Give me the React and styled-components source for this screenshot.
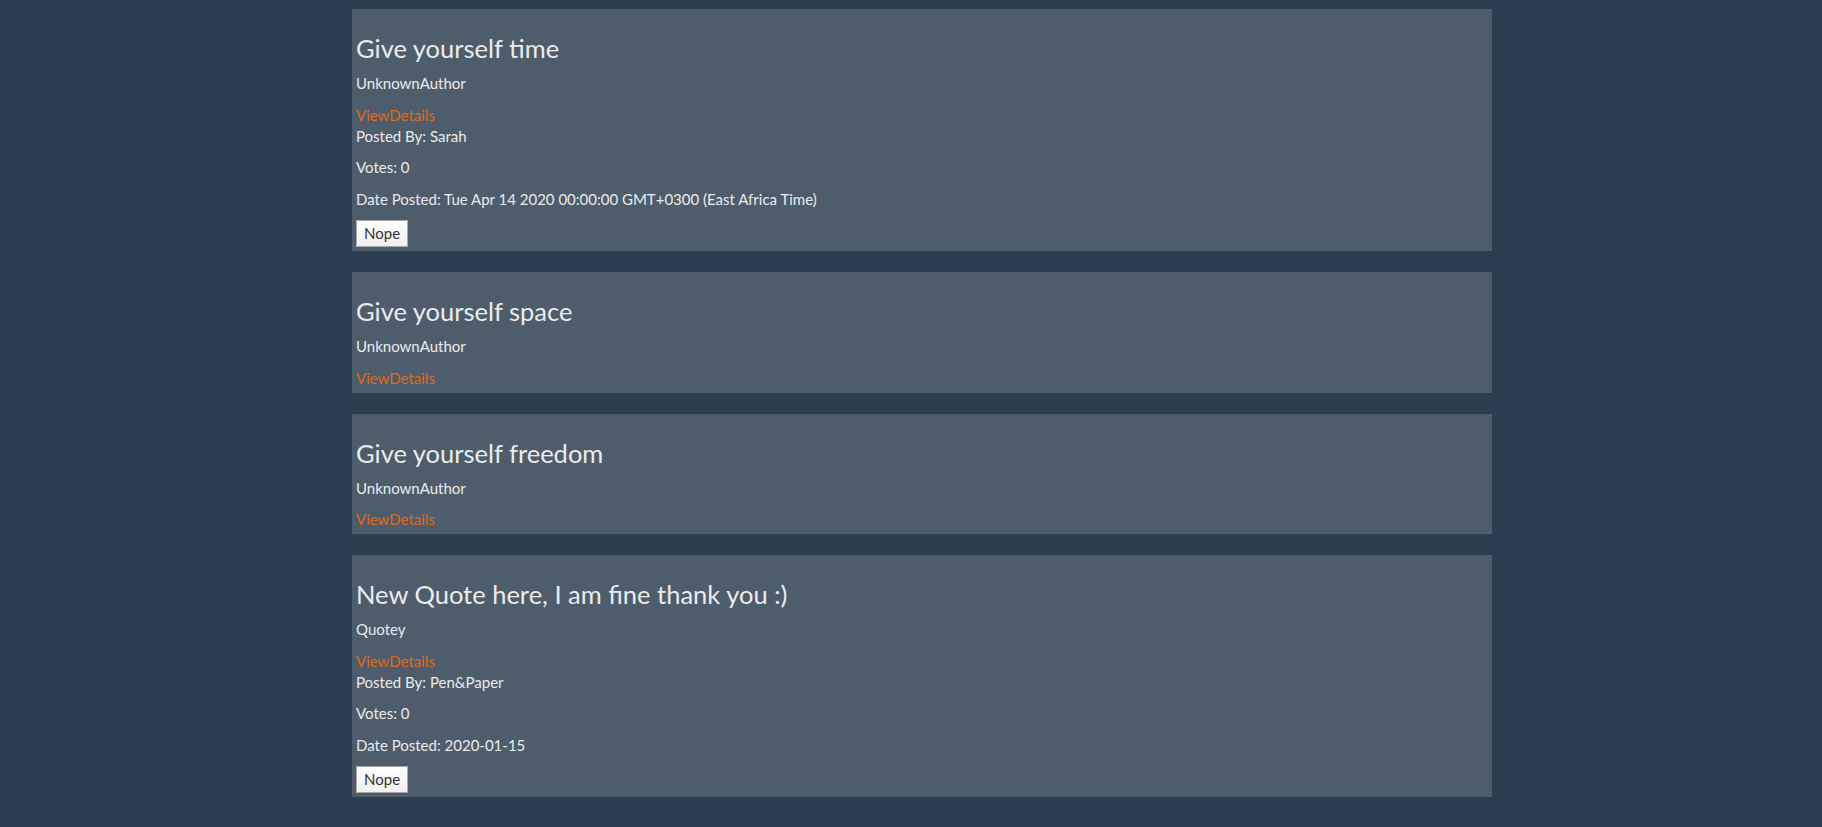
import React from 'react';
import styled, { createGlobalStyle } from 'styled-components';

const GlobalStyle = createGlobalStyle`
    html, body {
        margin: 0;
        background: #2b3e50;
    }
    body {
        font-family: Lato, "Open Sans", "Liberation Sans", sans-serif;
        font-size: 15px;
        line-height: 21px;
        color: #ebebeb;
    }
`;

const Page = styled.div`
    display: flex;
    justify-content: center;
    padding: 9px 0 0 22px;
`;

const List = styled.div`
    width: 1140px;
`;

const Card = styled.div`
    background: #4e5d6c;
    padding: 4px;
    margin-bottom: 21px;
`;

const Title = styled.h3`
    font-size: 25.5px;
    font-weight: 400;
    line-height: 28.6px;
    margin: 21px 0 10.5px;
`;

const Text = styled.p`
    margin: 0 0 10.5px;
`;

const Link = styled.a`
    display: block;
    color: #df691a;
    text-decoration: none;
    cursor: pointer;
`;

const Button = styled.button`
    font-family: inherit;
    font-size: 15px;
    line-height: 19px;
    color: #333;
    background: linear-gradient(#ffffff, #f0f0f0);
    border: 1px solid #a9a9a9;
    padding: 3px 7px;
    margin: 0;
`;

const quotes = [
    {
        text: 'Give yourself time',
        author: 'UnknownAuthor',
        details: { by: 'Sarah', votes: 0, date: 'Tue Apr 14 2020 00:00:00 GMT+0300 (East Africa Time)' },
    },
    { text: 'Give yourself space', author: 'UnknownAuthor' },
    { text: 'Give yourself freedom', author: 'UnknownAuthor' },
    {
        text: 'New Quote here, I am fine thank you :)',
        author: 'Quotey',
        details: { by: 'Pen&Paper', votes: 0, date: '2020-01-15' },
    },
];

function Quote({ quote }) {
    return (
        <Card>
            <Title>{quote.text}</Title>
            <Text>{quote.author}</Text>
            <Link>ViewDetails</Link>
            {quote.details && (
                <>
                    <Text>Posted By: {quote.details.by}</Text>
                    <Text>Votes: {quote.details.votes}</Text>
                    <Text>Date Posted: {quote.details.date}</Text>
                    <Button>Nope</Button>
                </>
            )}
        </Card>
    );
}

export default function App() {
    return (
        <>
            <GlobalStyle />
            <Page>
                <List>
                    {quotes.map((q) => (
                        <Quote key={q.text} quote={q} />
                    ))}
                </List>
            </Page>
        </>
    );
}
